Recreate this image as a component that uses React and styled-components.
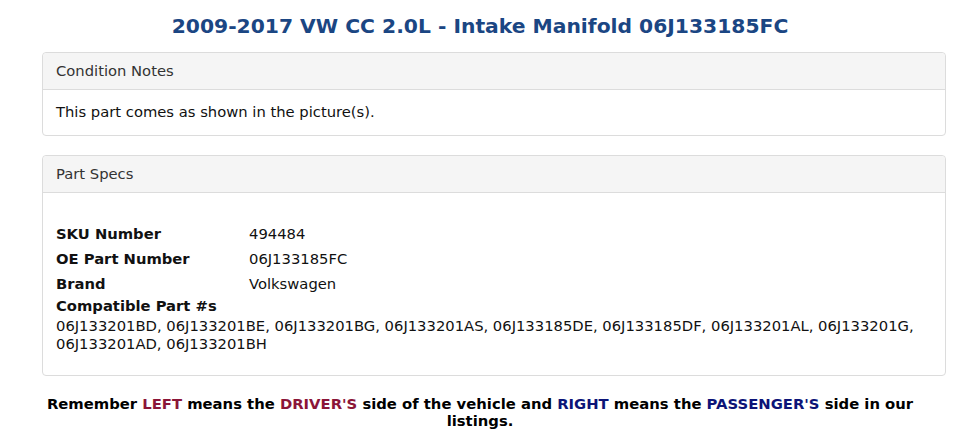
import React from "react";
import styled, { createGlobalStyle } from "styled-components";

const GlobalStyle = createGlobalStyle`
  body {
    margin: 0;
    background: #fff;
    font-family: "DejaVu Sans", sans-serif;
    font-size: 14.75px;
    color: #111;
  }
`;

const Page = styled.div`
  width: 960px;
`;

const Title = styled.h1`
  margin: 0;
  padding: 12px 0 12px;
  text-align: center;
  font-size: 20.3px;
  line-height: 28px;
  font-weight: bold;
  color: #1b4683;
`;

const Panels = styled.div`
  margin: 0 14px 0 42px;
`;

const Panel = styled.section`
  border: 1px solid #dcdcdc;
  border-radius: 4px;
  margin-bottom: 19px;
  background: #fff;
`;

const PanelHeading = styled.div`
  background: #f5f5f5;
  border-bottom: 1px solid #dcdcdc;
  border-radius: 4px 4px 0 0;
  padding: 8px 13px;
  line-height: 20px;
  color: #333;
`;

const PanelBody = styled.div`
  padding: ${p => (p.$spaced ? "28px 13px 22px" : "12px 13px 13px")};
  line-height: 20px;
`;

const SpecRow = styled.div`
  display: grid;
  grid-template-columns: 193px 1fr;
  line-height: 25px;
`;

const Label = styled.span`
  font-weight: bold;
`;

const CompatLabel = styled.div`
  font-weight: bold;
  line-height: 17px;
  margin-top: 1px;
`;

const CompatList = styled.div`
  line-height: 18px;
  margin-top: 3px;
`;

const Notice = styled.p`
  margin: 0 20px;
  text-align: center;
  font-weight: bold;
  font-size: 14.8px;
  line-height: 17px;
  color: #000;
`;

const Side = styled.span`
  color: ${p => (p.$tone === "left" ? "#8b1538" : "#0c1478")};
`;

const specs = [
  ["SKU Number", "494484"],
  ["OE Part Number", "06J133185FC"],
  ["Brand", "Volkswagen"],
];

const compatible = [
  "06J133201BD",
  "06J133201BE",
  "06J133201BG",
  "06J133201AS",
  "06J133185DE",
  "06J133185DF",
  "06J133201AL",
  "06J133201G",
  "06J133201AD",
  "06J133201BH",
];

export default function App() {
  return (
    <>
      <GlobalStyle />
      <Page>
        <Title>2009-2017 VW CC 2.0L - Intake Manifold 06J133185FC</Title>

        <Panels>
          <Panel>
            <PanelHeading>Condition Notes</PanelHeading>
            <PanelBody>This part comes as shown in the picture(s).</PanelBody>
          </Panel>

          <Panel>
            <PanelHeading>Part Specs</PanelHeading>
            <PanelBody $spaced>
              {specs.map(([k, v]) => (
                <SpecRow key={k}>
                  <Label>{k}</Label>
                  <span>{v}</span>
                </SpecRow>
              ))}
              <CompatLabel>Compatible Part #s</CompatLabel>
              <CompatList>{compatible.join(", ")}</CompatList>
            </PanelBody>
          </Panel>
        </Panels>

        <Notice>
          Remember <Side $tone="left">LEFT</Side> means the{" "}
          <Side $tone="left">DRIVER'S</Side> side of the vehicle and{" "}
          <Side $tone="right">RIGHT</Side> means the{" "}
          <Side $tone="right">PASSENGER'S</Side> side in our listings.
        </Notice>
      </Page>
    </>
  );
}
